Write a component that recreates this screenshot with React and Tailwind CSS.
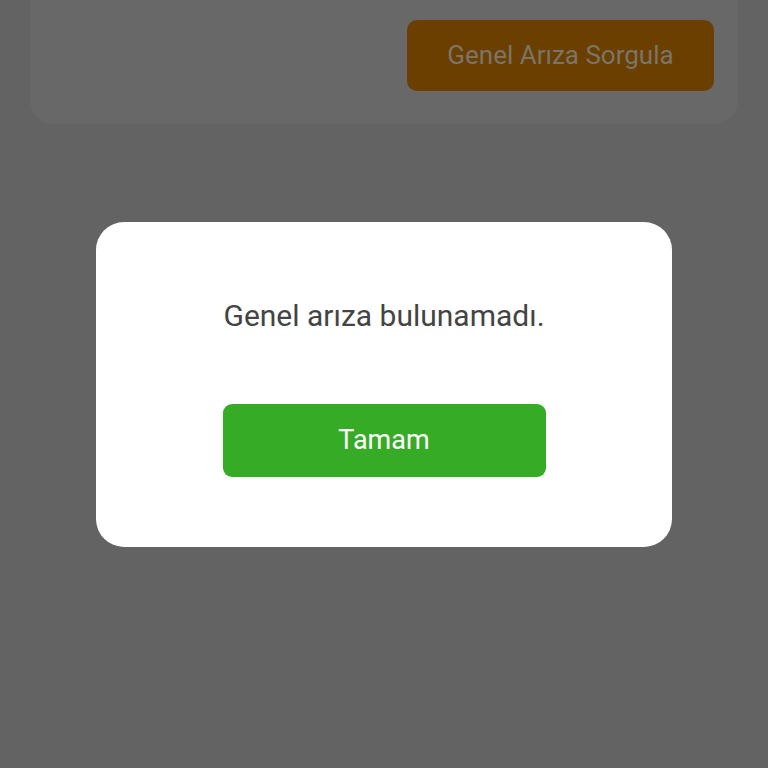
export default function App() {
  return (
    <div className="relative h-[768px] w-[768px] overflow-hidden bg-[#636363] font-['Roboto',sans-serif]">
      {/* dimmed page underneath */}
      <div className="mx-[30px] flex justify-end rounded-b-[24px] bg-[#686868] pt-[20px] pr-[24px] pb-[33px]">
        <button className="flex h-[71px] w-[307px] items-center justify-center rounded-[10px] bg-[#6a3f00] text-[26px] text-[#7c7466]">
          Genel Arıza Sorgula
        </button>
      </div>

      {/* dialog */}
      <div className="absolute inset-0 flex items-center justify-center">
        <div className="flex h-[325px] w-[576px] flex-col items-center rounded-[28px] bg-white pt-[76px]">
          <p className="text-[30px] leading-[36px] text-[#444444]">Genel arıza bulunamadı.</p>
          <button className="mt-[70px] flex h-[73px] w-[323px] items-center justify-center rounded-[9px] bg-[#35ab26] text-[27px] text-white">
            Tamam
          </button>
        </div>
      </div>
    </div>
  );
}
